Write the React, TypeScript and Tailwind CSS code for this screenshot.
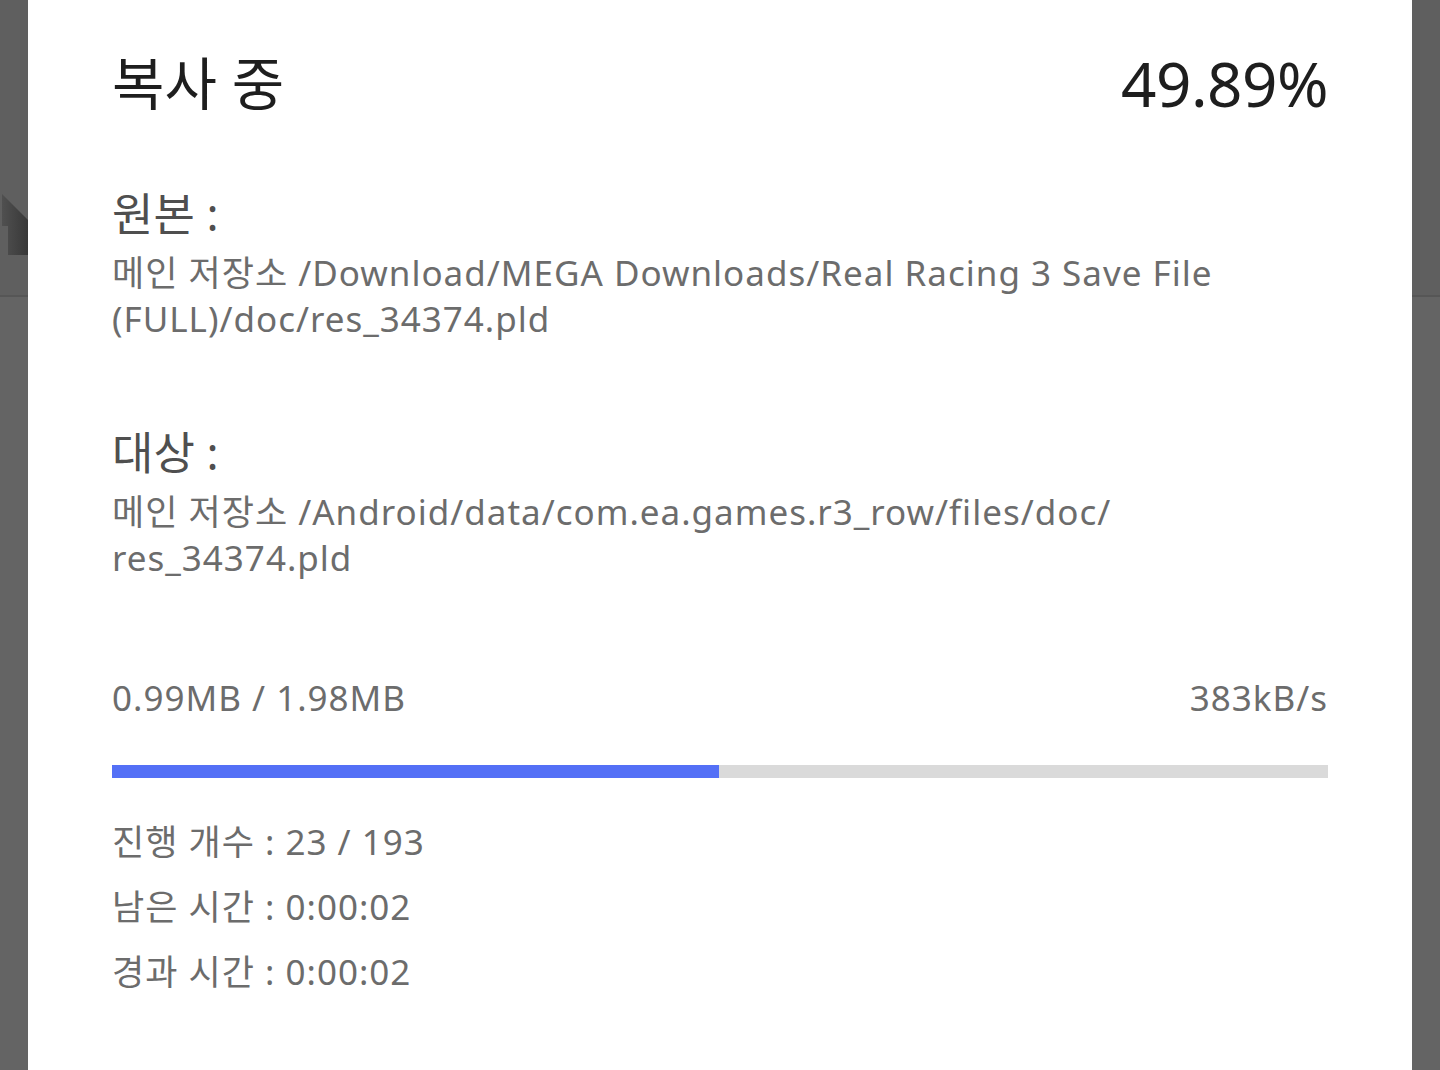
import React from "react";

const font = { fontFamily: '"Noto Sans", "Noto Sans CJK KR", sans-serif' };

function SideStrip({ showIcon }: { showIcon?: boolean }) {
  return (
    <div className="flex w-[28px] shrink-0 flex-col bg-[#5f5f5f]">
      <div className="relative h-[295px]">
        {showIcon && (
          <svg
            className="absolute left-0 top-[190px]"
            width="28"
            height="68"
            viewBox="0 0 28 68"
          >
            <defs>
              <linearGradient id="fold" x1="0" y1="0" x2="1" y2="0">
                <stop offset="0" stopColor="#505050" />
                <stop offset="1" stopColor="#383838" />
              </linearGradient>
            </defs>
            <polygon
              points="2,4 28,30 28,65 8,65 8,36 2,36"
              fill="url(#fold)"
            />
          </svg>
        )}
      </div>
      <div className="h-[2px] bg-[#565656]" />
      <div className="flex-1 bg-[#646464]" />
    </div>
  );
}

export default function App() {
  const pct = 49.89;

  return (
    <div className="flex h-[1070px] w-full overflow-hidden" style={font}>
      <SideStrip showIcon />

      <div className="flex flex-1 flex-col bg-white px-[84px] pt-[48px]">
        {/* 헤더 */}
        <div className="flex items-center justify-between leading-[70px]">
          <h1 className="text-[57px] font-normal text-[#1e1e1e]">복사 중</h1>
          <span className="text-[62px] tracking-[-0.5px] text-[#1e1e1e]">49.89%</span>
        </div>

        {/* 원본 */}
        <div className="mt-[68px] text-[45px] leading-[56px] text-[#4f4f4f]">원본 :</div>
        <div className="mt-[8px] text-[35px] leading-[46px] tracking-[1px] text-[#6c6c6c]">
          <div className="whitespace-nowrap">
            메인 저장소 /Download/MEGA Downloads/Real Racing 3 Save File
          </div>
          <div className="whitespace-nowrap">(FULL)/doc/res_34374.pld</div>
        </div>

        {/* 대상 */}
        <div className="mt-[83px] text-[45px] leading-[56px] text-[#4f4f4f]">대상 :</div>
        <div className="mt-[8px] text-[35px] leading-[46px] tracking-[1px] text-[#6c6c6c]">
          <div className="whitespace-nowrap">
            메인 저장소 /Android/data/com.ea.games.r3_row/files/doc/
          </div>
          <div className="whitespace-nowrap">res_34374.pld</div>
        </div>

        {/* 용량 / 속도 */}
        <div className="mt-[94px] flex justify-between text-[35px] leading-[46px] tracking-[1px] text-[#6c6c6c]">
          <span>0.99MB / 1.98MB</span>
          <span>383kB/s</span>
        </div>

        {/* 진행 바 */}
        <div className="mt-[44px] h-[13px] w-full bg-[#dadada]">
          <div className="h-full bg-[#5470f6]" style={{ width: `${pct}%` }} />
        </div>

        {/* 상세 */}
        <div className="mt-[31px] flex flex-col text-[35px] leading-[65px] tracking-[1px] text-[#6c6c6c]">
          <span>진행 개수 : 23 / 193</span>
          <span>남은 시간 : 0:00:02</span>
          <span>경과 시간 : 0:00:02</span>
        </div>
      </div>

      <SideStrip />
    </div>
  );
}
